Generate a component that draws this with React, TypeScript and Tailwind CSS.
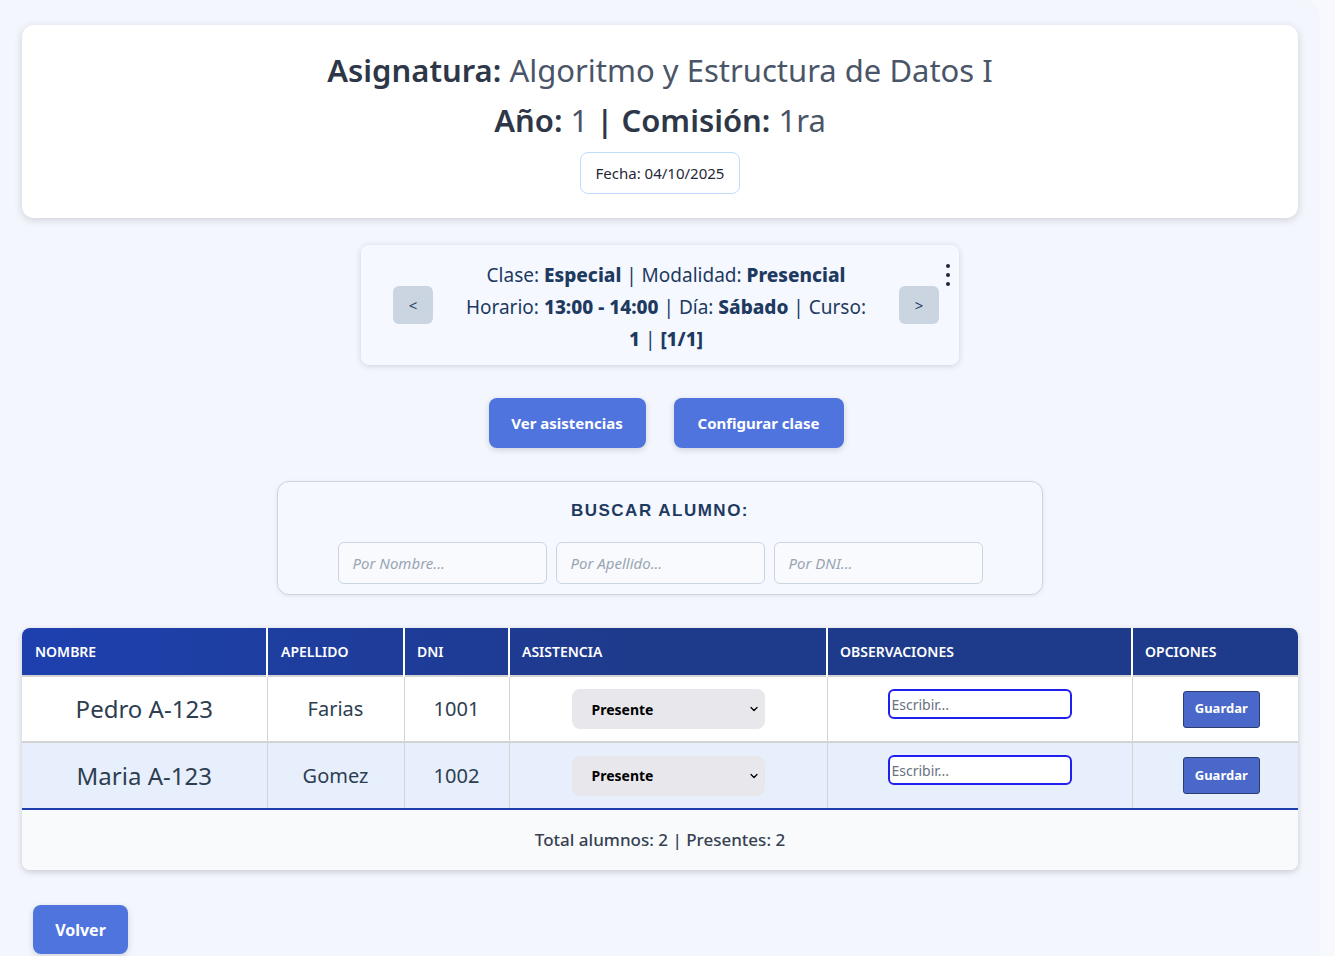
import { ChevronDown } from "lucide-react";

const alumnos = [
  { nombre: "Pedro A-123", apellido: "Farias", dni: "1001" },
  { nombre: "Maria A-123", apellido: "Gomez", dni: "1002" },
];

const App = () => {
  return (
    <div className="min-h-screen bg-[#f8f9fd] flex font-['Noto_Sans',sans-serif]">
      <div className="w-[1320px] min-h-screen bg-[#f3f6fd] rounded-tr-2xl pt-[25px] px-[22px]">
        {/* encabezado */}
        <div className="bg-white rounded-xl shadow-[0_2px_8px_rgba(0,0,0,0.15)] pt-[20px] pb-[24px] flex flex-col items-center text-[#2d3748]">
          <h1 className="text-[31px] leading-[50px]">
            <span className="font-semibold">Asignatura:</span>{" "}
            <span className="text-[#4a5568]">Algoritmo y Estructura de Datos I</span>
          </h1>
          <h2 className="text-[31px] leading-[50px]">
            <span className="font-semibold">Año:</span>{" "}
            <span className="text-[#4a5568]">1</span>{" "}
            <span className="font-semibold">| Comisión:</span>{" "}
            <span className="text-[#4a5568]">1ra</span>
          </h2>
          <div className="mt-[7px] h-[42px] px-[15px] flex items-center border border-[#bfdbfe] rounded-lg text-[15px] text-[#1f2937]">
            Fecha: 04/10/2025
          </div>
        </div>

        {/* clase */}
        <div className="flex justify-center mt-[27px]">
          <div className="relative w-[598px] h-[120px] bg-[#f5f8ff] rounded-lg shadow-[0_1px_6px_rgba(0,0,0,0.15)] flex items-center pl-[32px] pr-[20px]">
            <button className="w-[40px] h-[38px] rounded-md bg-[#cbd5e1] text-[#1e3a5f] text-[15px]">&lt;</button>
            <div className="flex-1 flex justify-center pt-[4px]">
              <p className="w-[412px] text-center text-[19px] leading-[32px] text-[#1e3a5f]">
                Clase: <b className="font-extrabold">Especial</b> | Modalidad: <b className="font-extrabold">Presencial</b>{" "}
                Horario: <b className="font-extrabold">13:00 - 14:00</b> | Día: <b className="font-extrabold">Sábado</b> | Curso:{" "}
                <b className="font-extrabold">1</b> | <b className="font-extrabold">[1/1]</b>
              </p>
            </div>
            <button className="w-[40px] h-[38px] rounded-md bg-[#cbd5e1] text-[#1e3a5f] text-[15px]">&gt;</button>
            <div className="absolute top-[19px] right-[9px] flex flex-col gap-[5px]">
              <span className="w-[4px] h-[4px] rounded-full bg-[#1e293b]" />
              <span className="w-[4px] h-[4px] rounded-full bg-[#1e293b]" />
              <span className="w-[4px] h-[4px] rounded-full bg-[#1e293b]" />
            </div>
          </div>
        </div>

        {/* acciones */}
        <div className="flex justify-center gap-[28px] mt-[33px] pl-[12px]">
          <button className="w-[157px] h-[50px] rounded-lg bg-[#5074de] text-white font-bold text-[15px] shadow-[0_2px_6px_rgba(0,0,0,0.15)]">
            Ver asistencias
          </button>
          <button className="w-[170px] h-[50px] rounded-lg bg-[#5074de] text-white font-bold text-[15px] shadow-[0_2px_6px_rgba(0,0,0,0.15)]">
            Configurar clase
          </button>
        </div>

        {/* buscador */}
        <div className="flex justify-center mt-[33px]">
          <div className="w-[766px] h-[114px] bg-[#f5f8fe] border border-[#cfd4dc] rounded-xl shadow-[0_1px_4px_rgba(0,0,0,0.08)] flex flex-col items-center pt-[16px]">
            <h3 className="font-['Liberation_Sans',sans-serif] font-bold text-[17px] tracking-[1.5px] text-[#1e3a5f]">
              BUSCAR ALUMNO:
            </h3>
            <div className="flex gap-[9px] mt-[18px]">
              {["Por Nombre...", "Por Apellido...", "Por DNI..."].map((p) => (
                <input
                  key={p}
                  placeholder={p}
                  className="w-[209px] h-[42px] px-[14px] bg-[#f8fafd] border border-[#cbd5e1] rounded-md text-[15px] italic placeholder:text-[#9aa5b4] outline-none"
                />
              ))}
            </div>
          </div>
        </div>

        {/* tabla */}
        <div className="mt-[33px] rounded-lg overflow-hidden shadow-[0_2px_6px_rgba(0,0,0,0.18)]">
          <table className="w-full border-collapse table-fixed">
            <colgroup>
              <col className="w-[245px]" />
              <col className="w-[137px]" />
              <col className="w-[105px]" />
              <col className="w-[318px]" />
              <col className="w-[305px]" />
              <col className="w-[166px]" />
            </colgroup>
            <thead>
              <tr className="bg-gradient-to-r from-[#1e40af] via-[#1e3a8a] to-[#1e3a8a] h-[48px] text-white text-[14px] font-semibold text-left">
                <th className="pl-[13px] font-semibold border-r-2 border-white">NOMBRE</th>
                <th className="pl-[13px] font-semibold border-r-2 border-white">APELLIDO</th>
                <th className="pl-[12px] font-semibold border-r-2 border-white">DNI</th>
                <th className="pl-[12px] font-semibold border-r-2 border-white">ASISTENCIA</th>
                <th className="pl-[12px] font-semibold border-r-2 border-white">OBSERVACIONES</th>
                <th className="pl-[12px] font-semibold">OPCIONES</th>
              </tr>
            </thead>
            <tbody className="text-[#2c3e50]">
              {alumnos.map((a, i) => (
                <tr
                  key={a.dni}
                  className={
                    i === 0
                      ? "bg-white h-[66px] border-t-2 border-[#d4d4d4]"
                      : "bg-[#e8effc] h-[67px] border-t-2 border-[#d4d4d4] border-b-2 border-b-[#1e40af]"
                  }
                >
                  <td className="text-center text-[24px] border-r border-[#d4d4d4]">{a.nombre}</td>
                  <td className="text-center text-[20px] border-r border-[#d4d4d4]">{a.apellido}</td>
                  <td className="text-center text-[20px] border-r border-[#d4d4d4]">{a.dni}</td>
                  <td className="border-r border-[#d4d4d4]">
                    <div className="flex justify-center">
                      <div className="w-[193px] h-[40px] rounded-lg bg-[#e8e8ec] flex items-center justify-between pl-[20px] pr-[5px] text-black font-bold text-[14px]">
                        Presente
                        <ChevronDown size={12} strokeWidth={2.5} />
                      </div>
                    </div>
                  </td>
                  <td className="border-r border-[#d4d4d4] align-top pt-[12px]">
                    <div className="flex justify-center">
                      <input
                        placeholder="Escribir..."
                        className="w-[184px] h-[30px] pl-[2px] border-2 border-[#2020ee] rounded-md bg-white text-[14px] placeholder:text-[#6b7280] outline-none"
                      />
                    </div>
                  </td>
                  <td className="pl-[12px]">
                    <div className="flex justify-center">
                      <button className="w-[77px] h-[37px] rounded-[3px] bg-[#4a68c9] border border-[#2c3e70] text-white font-bold text-[13px]">
                        Guardar
                      </button>
                    </div>
                  </td>
                </tr>
              ))}
              <tr className="bg-[#f8fafc] h-[61px]">
                <td colSpan={6} className="text-center text-[17px] font-medium text-[#374151]">
                  Total alumnos: 2 | Presentes: 2
                </td>
              </tr>
            </tbody>
          </table>
        </div>

        <div className="mt-[35px] ml-[11px]">
          <button className="w-[95px] h-[49px] rounded-lg bg-[#5074de] text-white font-bold text-[16px] shadow-[0_2px_6px_rgba(0,0,0,0.15)]">
            Volver
          </button>
        </div>
      </div>
    </div>
  );
};

export default App;
